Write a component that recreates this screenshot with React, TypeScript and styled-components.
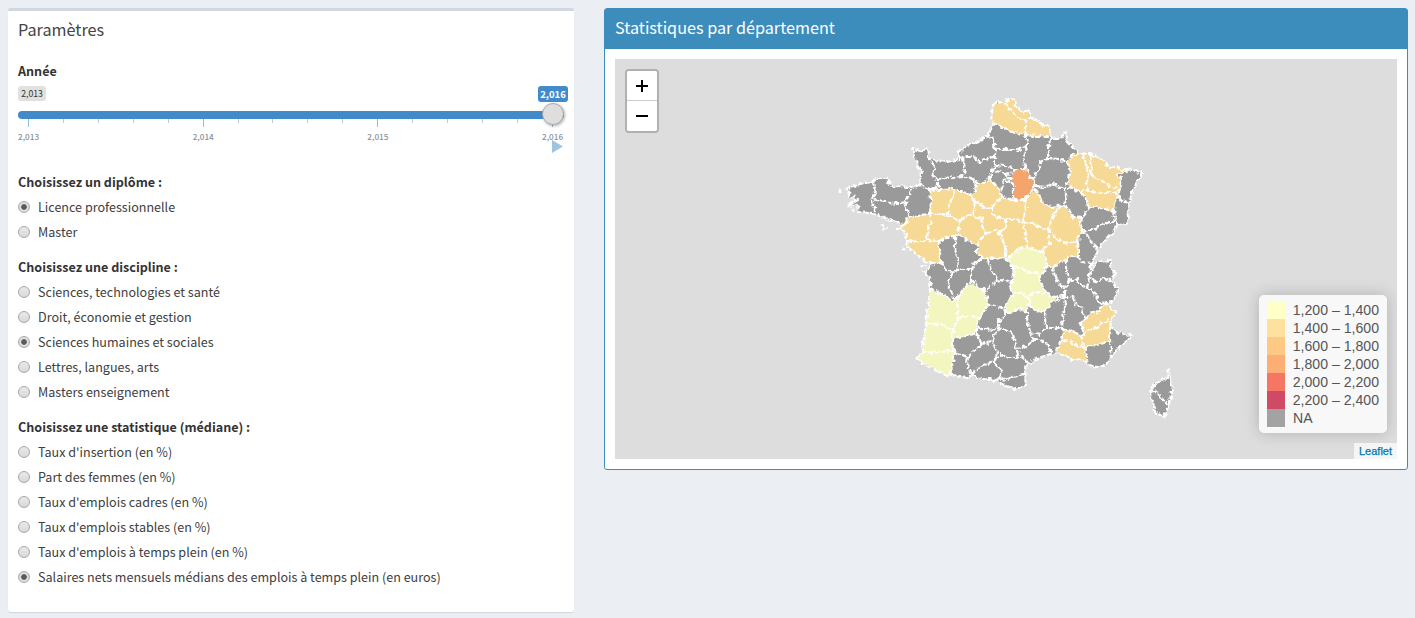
import React, { useState } from "react";
import styled, { createGlobalStyle, css } from "styled-components";

const GlobalStyle = createGlobalStyle`
  * { box-sizing: border-box; }
  body {
    margin: 0;
    background: #ebeff4;
    color: #333;
    font-family: "Source Sans Pro", "Noto Sans CJK SC", "Open Sans", sans-serif;
    font-size: 12.57px;
  }
`;

const Page = styled.main`
  display: grid;
  grid-template-columns: 566px 804px;
  column-gap: 30px;
  align-items: start;
  padding: 8px;
`;

const Box = styled.section<{ $solid?: boolean }>`
  background: #fff;
  border-radius: 3px;
  ${(p) =>
    p.$solid
      ? css`
          border: 1px solid #3c8dbc;
          height: 462px;
        `
      : css`
          border-top: 3px solid #d2d6de;
          height: 604px;
          box-shadow: 0 1px 1px rgba(0, 0, 0, 0.1);
        `}
`;

const BoxHeader = styled.header<{ $solid?: boolean }>`
  display: flex;
  align-items: center;
  height: ${(p) => (p.$solid ? 40 : 38)}px;
  padding: 0 10px ${(p) => (p.$solid ? 4 : 2)}px;
  color: ${(p) => (p.$solid ? "#fff" : "#444")};
  background: ${(p) => (p.$solid ? "#3c8dbc" : "transparent")};
`;

const BoxTitle = styled.h3`
  margin: 0;
  font-size: 16.2px;
  font-weight: 400;
  line-height: 18px;
`;

const BoxBody = styled.div<{ $form?: boolean }>`
  padding: ${(p) => (p.$form ? 9 : 10)}px 10px 10px;
`;

const GroupLabel = styled.div`
  height: 25px;
  line-height: 25px;
  font-weight: 700;
`;

/* slider */
const Slider = styled.div`
  position: relative;
  height: 86px;
  padding-top: 3px;
`;

const MinBadge = styled.div`
  width: 28px;
  height: 15px;
  border-radius: 3px;
  background: #e1e1e1;
  color: #333;
  font-size: 8.6px;
  line-height: 15px;
  text-align: center;
`;

const ValueBadge = styled.div`
  position: absolute;
  top: 3px;
  left: 520px;
  width: 30px;
  height: 16px;
  border-radius: 3px;
  background: #428bca;
  color: #fff;
  font-size: 9.5px;
  font-weight: 700;
  line-height: 16px;
  text-align: center;
`;

const Track = styled.div`
  width: 546px;
  height: 8px;
  margin-top: 10px;
  border-radius: 4px;
  background: #428bca;
`;

const Handle = styled.div`
  position: absolute;
  top: 20px;
  left: 524px;
  width: 22px;
  height: 22px;
  border: 1px solid #aaa;
  border-radius: 50%;
  background: #dedede;
  box-shadow: 1px 1px 3px rgba(0, 0, 0, 0.3);
`;

const Ticks = styled.div`
  display: flex;
  justify-content: space-between;
  width: 525px;
  height: 8px;
  margin-left: 10px;
`;

const Tick = styled.span<{ $major: boolean }>`
  width: 1px;
  height: ${(p) => (p.$major ? 8 : 4)}px;
  background: ${(p) => (p.$major ? "#8fbce0" : "#c3c9ce")};
`;

const TickLabels = styled.div`
  display: flex;
  justify-content: space-between;
  width: 545px;
  margin-top: 2px;
  color: #87939c;
  font-size: 8.2px;
  font-weight: 500;
  line-height: 15px;
`;

const TickLabel = styled.span`
  width: 21px;
  text-align: center;
`;

const PlayButton = styled.button`
  position: absolute;
  top: 57px;
  left: 534px;
  width: 11px;
  height: 13px;
  padding: 0;
  border: 0;
  background: #9ec5dd;
  clip-path: polygon(0 0, 100% 50%, 0 100%);
`;

/* radio groups */
const Group = styled.div`
  margin-bottom: 10px;
`;

const Option = styled.label`
  display: flex;
  align-items: center;
  gap: 8px;
  height: 25px;
  line-height: 25px;
  color: #404040;
`;

const Radio = styled.input`
  appearance: none;
  flex: none;
  width: 12px;
  height: 12px;
  margin: 0;
  border: 1px solid #a8a8a8;
  border-radius: 50%;
  background: linear-gradient(#e9e9e9, #d9d9d9);
  &:checked {
    background: radial-gradient(circle, #5a5a5a 0 2.4px, #dedede 3.2px);
  }
`;

/* map */
const MapView = styled.div`
  position: relative;
  height: 400px;
  background: #ddd;
  overflow: hidden;
  font-family: "Liberation Sans", Arial, sans-serif;
`;

const MapDrawing = styled.svg`
  display: block;
`;

const ZoomBar = styled.div`
  position: absolute;
  top: 10px;
  left: 10px;
  width: 34px;
  border: 2px solid rgba(0, 0, 0, 0.2);
  border-radius: 4px;
  background-clip: padding-box;
`;

const ZoomButton = styled.button`
  display: flex;
  align-items: center;
  justify-content: center;
  width: 30px;
  height: 30px;
  padding: 0;
  border: 0;
  background: #fff;
  &:first-child {
    border-bottom: 1px solid #ccc;
    border-radius: 2px 2px 0 0;
  }
  &:last-child {
    border-radius: 0 0 2px 2px;
  }
`;

const Legend = styled.div`
  position: absolute;
  right: 10px;
  bottom: 26px;
  width: 128px;
  padding: 6px 8px;
  border-radius: 5px;
  background: rgba(255, 255, 255, 0.8);
  box-shadow: 0 0 15px rgba(0, 0, 0, 0.2);
  color: #555;
  font-size: 14.1px;
`;

const LegendRow = styled.div`
  display: flex;
  gap: 8px;
  height: 18px;
  line-height: 18px;
  white-space: nowrap;
`;

const Swatch = styled.i<{ $color: string }>`
  width: 18px;
  height: 18px;
  background: ${(p) => p.$color};
`;

const Attribution = styled.div`
  position: absolute;
  right: 0;
  bottom: 0;
  padding: 0 5px;
  background: rgba(255, 255, 255, 0.7);
  color: #0078a8;
  font-size: 11px;
  line-height: 16px;
  -webkit-text-stroke: 0.25px #0078a8;
`;

const GROUPS = [
  {
    name: "diplome",
    label: "Choisissez un diplôme :",
    value: 0,
    options: ["Licence professionnelle", "Master"],
  },
  {
    name: "discipline",
    label: "Choisissez une discipline :",
    value: 2,
    options: [
      "Sciences, technologies et santé",
      "Droit, économie et gestion",
      "Sciences humaines et sociales",
      "Lettres, langues, arts",
      "Masters enseignement",
    ],
  },
  {
    name: "statistique",
    label: "Choisissez une statistique (médiane) :",
    value: 5,
    options: [
      "Taux d'insertion (en %)",
      "Part des femmes (en %)",
      "Taux d'emplois cadres (en %)",
      "Taux d'emplois stables (en %)",
      "Taux d'emplois à temps plein (en %)",
      "Salaires nets mensuels médians des emplois à temps plein (en euros)",
    ],
  },
];

const LEGEND: [string, string][] = [
  ["#ffffc8", "1,200 – 1,400"],
  ["#fee19f", "1,400 – 1,600"],
  ["#fdc983", "1,600 – 1,800"],
  ["#fcae74", "1,800 – 2,000"],
  ["#f57663", "2,000 – 2,200"],
  ["#d04a66", "2,200 – 2,400"],
  ["#a3a3a3", "NA"],
];

const MAINLAND =
  "993,105 997,103 1003,102 1009,99 1014,99 1016,106 1022,113 1028,110 1030,113 1030,118 1035,120 1040,122 1043,126 1049,126 1051,132 1050,136 1052,139 1060,139 1063,137 1066,131 1067,140 1072,147 1077,150 1079,153 1090,154 1098,157 1104,161 1110,168 1117,167 1122,170 1128,168 1135,171 1142,173 1137,183 1133,190 1130,200 1127,206 1128,217 1126,224 1122,225 1117,223 1113,232 1107,239 1101,245 1098,250 1096,254 1093,260 1091,265 1092,270 1098,262 1105,261 1110,260 1112,270 1115,274 1110,280 1117,287 1118,295 1112,302 1105,303 1110,307 1116,313 1112,318 1110,327 1115,330 1123,335 1132,334 1128,340 1122,345 1117,351 1112,354 1108,362 1103,367 1097,367 1090,366 1086,363 1082,361 1077,358 1073,360 1067,357 1060,353 1050,354 1040,358 1033,361 1027,364 1025,373 1026,387 1018,387 1013,389 1006,386 1000,383 995,381 990,379 983,379 978,377 972,374 968,378 960,377 950,374 945,375 938,371 933,368 928,367 923,363 916,358 922,353 925,333 928,307 930,290 930,280 925,272 932,264 928,262 920,258 914,252 908,247 907,240 905,232 898,229 907,223 903,225 897,222 891,221 885,218 877,215 867,213 858,212 857,206 848,205 858,200 850,197 847,190 855,185 865,183 873,182 877,178 888,178 890,184 893,188 902,186 912,188 920,185 921,170 917,163 914,157 913,148 919,151 927,149 928,157 933,160 947,162 960,159 958,152 967,145 978,142 988,135 993,125 992,113";

const CORSICA =
  "1169,369 1171,377 1172,390 1170,400 1168,407 1164,418 1160,415 1155,412 1153,402 1151,392 1154,385 1159,381 1164,379 1168,378";

type Zone = { fill: string; points: string };

const ORANGE_LIGHT = "#f5d995";
const PALE = "#f4f6c0";

const ZONES: Zone[] = [
  {
    fill: ORANGE_LIGHT,
    points:
      "993,105 1003,102 1009,99 1014,99 1016,106 1022,113 1028,110 1030,118 1040,122 1043,126 1049,126 1051,132 1050,136 1038,136 1026,135 1018,134 1007,130 1000,126 993,124 992,113",
  },
  {
    fill: ORANGE_LIGHT,
    points:
      "1079,153 1090,154 1098,157 1104,161 1110,168 1117,167 1128,168 1128,172 1117,173 1116,176 1122,178 1120,188 1118,197 1115,205 1113,212 1108,210 1098,207 1088,207 1087,200 1081,193 1069,187 1069,180 1070,173 1068,162 1072,155",
  },
  {
    fill: ORANGE_LIGHT,
    points:
      "930,189 941,190 952,188 955,191 963,191 972,196 977,187 978,183 987,181 990,176 993,182 1000,190 1001,197 1014,200 1025,200 1027,197 1036,190 1040,197 1045,205 1053,207 1062,205 1066,207 1068,211 1073,217 1082,218 1080,223 1082,230 1079,235 1078,242 1079,252 1078,257 1068,257 1065,260 1058,264 1053,266 1047,266 1047,260 1042,252 1033,249 1027,248 1020,248 1012,255 1007,259 998,257 990,259 982,258 977,252 977,245 968,240 958,235 950,237 938,241 940,250 940,262 932,264 920,258 914,252 908,247 907,240 905,232 898,229 908,217 918,216 930,213 931,200",
  },
  {
    fill: ORANGE_LIGHT,
    points:
      "1062,328 1068,330 1075,332 1082,337 1083,330 1080,325 1086,318 1090,313 1100,312 1100,307 1105,303 1110,307 1116,313 1112,318 1110,327 1110,337 1110,343 1104,343 1097,345 1085,347 1087,355 1086,363 1077,358 1073,360 1067,357 1060,353 1055,352 1060,343 1063,335",
  },
  {
    fill: PALE,
    points:
      "1027,248 1033,249 1042,252 1047,260 1046,266 1042,273 1039,277 1043,287 1045,293 1052,295 1057,300 1050,305 1045,311 1035,310 1028,306 1027,312 1020,309 1013,311 1005,315 1007,302 1013,293 1010,287 1012,282 1014,275 1013,267 1007,259 1012,255 1020,248",
  },
  {
    fill: PALE,
    points:
      "930,288 943,295 953,301 958,297 965,287 972,283 979,288 985,290 988,305 980,317 977,327 977,333 967,336 952,338 952,348 955,352 953,363 950,374 945,375 933,368 923,363 916,358 922,353 925,333 928,307",
  },
  {
    fill: "#f4a56c",
    points:
      "1015,170 1023,169 1028,170 1030,177 1034,180 1034,187 1027,197 1025,200 1014,200 1014,190 1013,181 1009,180 1012,175",
  },
];

const BORDERS = [
  // Nord, Picardie, Champagne
  "1005,103 1007,108 1015,114 1020,118 1025,120 1026,127 1026,134 1027,147 1023,157 1025,165 1023,169",
  "993,124 1000,126 1007,130 1018,134 1026,135 1038,136 1050,136",
  "987,133 993,140 995,148 1005,150 1015,150 1027,147",
  "995,148 995,157 995,165 993,170 990,177",
  "960,158 963,157 973,157 980,162 987,158 995,157",
  "995,165 1005,166 1015,169 1023,169 1028,170 1030,177 1034,180 1034,187",
  "1052,139 1048,148 1048,158 1040,162 1040,168 1035,175 1033,179",
  "1048,158 1057,159 1068,162 1070,173 1069,180 1065,187",
  "1079,153 1072,155 1068,162",
  "1035,186 1047,187 1052,183 1060,188 1065,187 1065,190 1067,200 1063,206",
  // Lorraine, Alsace, Franche-Comté
  "1083,155 1087,167 1088,178 1086,188",
  "1090,155 1092,165 1090,173 1095,178 1105,182 1113,188 1119,187",
  "1128,169 1124,173 1117,173 1116,176 1122,178 1120,188 1118,197 1115,205 1113,212",
  "1086,190 1092,192 1103,193 1118,193",
  "1069,187 1080,192 1086,190",
  "1082,193 1087,200 1088,207 1098,207 1108,210 1113,212 1117,223",
  "1118,198 1127,202",
  "1088,207 1088,211 1082,218 1080,223 1082,230 1079,235 1078,242 1079,252 1078,257",
  "1034,188 1037,193 1040,197 1045,205 1053,207 1062,205 1068,208 1073,217 1082,218",
  "1082,230 1090,231 1100,226 1110,222 1115,221",
  "1082,230 1087,235 1092,242 1097,249",
  // Bourgogne, Centre
  "1062,206 1057,210 1052,218 1049,230 1048,236 1050,243 1043,250 1042,252 1047,260 1047,266",
  "1049,230 1055,237 1063,243 1078,241",
  "1024,222 1033,224 1042,228 1049,230",
  "1025,200 1026,210 1023,220 1025,230 1026,240 1027,248",
  "1001,197 1014,200 1025,200 1027,197 1034,189",
  "975,202 980,205 986,208 992,207 997,202 1001,199",
  "992,207 992,214 1000,218 1005,219 1015,219 1024,222",
  "1005,219 1006,224 1005,228 998,233 1002,238 1005,247 1005,258",
  "987,233 993,230 999,232",
  "1042,252 1033,249 1027,248 1020,248 1012,255 1007,259 998,257 990,259 982,258 977,252 977,245",
  // Auvergne
  "1007,259 1013,267 1020,267 1025,271 1033,273 1042,273",
  "1046,266 1042,273 1039,277 1043,287 1045,293 1055,297 1063,295",
  "1013,267 1014,275 1012,282 1010,287 1013,293 1020,293 1028,297 1033,293 1045,293",
  "1028,297 1030,303 1027,310 1027,318 1030,332",
  "1030,306 1035,310 1045,311 1050,305 1057,300 1063,295",
  "1013,293 1007,302 1005,315 1013,311 1020,308 1027,313",
  // Rhône-Alpes, Provence
  "1047,266 1053,266 1058,264 1065,260 1068,257 1078,257 1082,262 1092,263",
  "1053,267 1055,277 1060,285 1065,289",
  "1067,260 1067,273 1070,280 1065,288 1065,297",
  "1070,280 1077,280 1082,285 1087,288 1095,293 1098,302 1105,303",
  "1091,265 1089,277 1087,288",
  "1089,275 1092,280 1100,282 1104,278 1110,280",
  "1063,295 1066,303 1063,317 1062,328",
  "1065,297 1073,297 1075,305 1082,308 1083,313 1086,318 1080,325 1083,330 1083,335",
  "1086,318 1090,313 1100,312 1100,307 1105,303",
  "1083,335 1090,330 1098,327 1102,322 1112,321",
  "1062,328 1068,330 1075,332 1082,337 1082,341 1085,347 1087,355 1086,363",
  "1063,340 1069,341 1075,345 1085,347 1097,345 1104,343 1110,343",
  "1110,327 1110,337 1110,345 1112,353",
  // Languedoc, Midi-Pyrénées
  "1045,311 1045,318 1046,328 1053,328 1062,328 1063,335 1060,343 1055,352",
  "1030,332 1040,334 1046,328",
  "1030,332 1034,340 1028,345 1023,347 1016,348 1018,355 1023,358 1027,363",
  "1034,340 1040,340 1047,342 1049,348 1051,353",
  "1005,315 998,322 1000,328 1012,333 1015,342 1017,348",
  "995,358 1001,355 1007,357 1018,357",
  "995,363 1002,370 1000,378 1007,379 1013,377 1025,375",
  "1000,378 995,382",
  "973,374 975,370 983,365 995,362 995,358",
  "1000,329 993,335 993,343 997,352 995,358",
  // Limousin, Aquitaine
  "982,258 975,263 972,269 972,280 965,287 957,298",
  "988,260 990,268 997,278 998,282 1005,280 1012,282",
  "972,280 979,288 985,290 991,285 998,282",
  "985,290 988,305 996,306 1003,308 1005,312",
  "988,305 980,317 977,327 990,330 1000,328",
  "930,288 943,295 953,301 958,297 957,312 958,320 953,330 952,338 952,348",
  "928,323 942,325 953,330",
  "958,318 968,316 978,317",
  "952,338 967,336 977,333 977,327",
  "922,353 940,352 955,351 953,363 950,374",
  "952,348 957,353 968,357 967,363 970,373",
  "977,334 982,345 975,351 968,357",
  "981,344 993,342",
  // Poitou-Charentes, Pays de la Loire
  "940,262 945,268 953,273 958,270 965,269 972,269",
  "953,273 947,282 952,293 955,299",
  "955,237 955,247 957,258 958,270",
  "932,264 940,262 940,250 938,241",
  "908,240 920,243 927,240 938,241 950,237 958,235 968,240 977,245 982,237 987,233",
  "960,220 959,227 958,235",
  "930,214 931,220 928,230 927,240",
  "973,212 973,216 982,220 983,228 987,233",
  // Normandie, Bretagne, Maine
  "907,222 908,217 918,216 930,213 948,215 958,220 966,218 973,212 975,202 973,197",
  "954,192 950,203 948,215",
  "930,189 931,200 930,213",
  "920,185 930,189 941,190 952,188 955,191 963,191 972,196 977,187 972,178",
  "928,157 935,168 932,177 938,179 938,187 930,189",
  "938,179 945,178 952,177 963,176 972,178 978,183 987,181 990,176",
  "963,157 965,170 963,176",
  "873,182 875,193 872,202 875,207 873,212",
  "875,200 885,202 897,204 905,202 910,195 912,188",
  "905,202 908,215",
  // Île-de-France
  "990,177 993,182 1000,190 1001,197",
  "991,170 1000,172 1006,175 1004,180 1001,190",
  "1005,174 1007,181 1013,183 1013,198",
  "1006,174 1012,173 1015,169",
  "1008,177 1012,179 1009,182",
  // Corse
  "1152,390 1161,397 1166,404",
];

const ISLETS: [number, number][] = [
  [840, 190], [883, 229], [887, 228], [904, 249], [855, 201], [858, 207],
  [921, 266], [925, 266], [855, 196], [853, 210], [1009, 178], [882, 225],
];

const toPath = (points: string, close = false) =>
  "M" + points.split(" ").join("L") + (close ? "Z" : "");

function France() {
  return (
    <MapDrawing width="782" height="400" viewBox="615 59 782 400">
      <defs>
        <filter id="coast" x="-2%" y="-2%" width="104%" height="104%" colorInterpolationFilters="sRGB">
          <feTurbulence type="fractalNoise" baseFrequency="0.2" numOctaves="2" seed="4" result="n" />
          <feDisplacementMap in="SourceGraphic" in2="n" scale="6" xChannelSelector="R" yChannelSelector="G" />
        </filter>
      </defs>
      <g filter="url(#coast)">
        <path d={toPath(MAINLAND, true)} fill="#9a9a9a" />
        <path d={toPath(CORSICA, true)} fill="#9a9a9a" />
        {ZONES.map((z) => (
          <path key={z.points} d={toPath(z.points, true)} fill={z.fill} />
        ))}
        <g fill="none" stroke="#fff" strokeWidth="2.2" strokeDasharray="3.6 3" strokeLinecap="round" strokeLinejoin="round">
          <path d={toPath(MAINLAND, true)} />
          <path d={toPath(CORSICA, true)} />
          {BORDERS.map((b) => (
            <path key={b} d={toPath(b)} />
          ))}
        </g>
        {ISLETS.map(([x, y]) => (
          <circle key={`${x}-${y}`} cx={x} cy={y} r="1.5" fill="#fff" />
        ))}
      </g>
    </MapDrawing>
  );
}

function RadioGroup({ group }: { group: (typeof GROUPS)[number] }) {
  const [value, setValue] = useState(group.value);
  return (
    <Group>
      <GroupLabel>{group.label}</GroupLabel>
      {group.options.map((text, i) => (
        <Option key={text}>
          <Radio type="radio" name={group.name} checked={value === i} onChange={() => setValue(i)} />
          {text}
        </Option>
      ))}
    </Group>
  );
}

export default function App() {
  return (
    <>
      <GlobalStyle />
      <Page>
        <Box>
          <BoxHeader>
            <BoxTitle>Paramètres</BoxTitle>
          </BoxHeader>
          <BoxBody $form>
            <GroupLabel>Année</GroupLabel>
            <Slider>
              <MinBadge>2,013</MinBadge>
              <ValueBadge>2,016</ValueBadge>
              <Track />
              <Ticks>
                {Array.from({ length: 16 }, (_, i) => (
                  <Tick key={i} $major={i % 5 === 0} />
                ))}
              </Ticks>
              <TickLabels>
                {["2,013", "2,014", "2,015", "2,016"].map((t) => (
                  <TickLabel key={t}>{t}</TickLabel>
                ))}
              </TickLabels>
              <Handle />
              <PlayButton aria-label="Play" />
            </Slider>
            {GROUPS.map((g) => (
              <RadioGroup key={g.name} group={g} />
            ))}
          </BoxBody>
        </Box>
        <Box $solid>
          <BoxHeader $solid>
            <BoxTitle>Statistiques par département</BoxTitle>
          </BoxHeader>
          <BoxBody>
            <MapView>
              <France />
              <ZoomBar>
                <ZoomButton aria-label="Zoom in">
                  <svg width="12" height="12" viewBox="0 0 12 12">
                    <path d="M0 6h12M6 0v12" stroke="#000" strokeWidth="2" />
                  </svg>
                </ZoomButton>
                <ZoomButton aria-label="Zoom out">
                  <svg width="12" height="12" viewBox="0 0 12 12">
                    <path d="M0 6h12" stroke="#000" strokeWidth="2" />
                  </svg>
                </ZoomButton>
              </ZoomBar>
              <Legend>
                {LEGEND.map(([color, text]) => (
                  <LegendRow key={text}>
                    <Swatch $color={color} />
                    {text}
                  </LegendRow>
                ))}
              </Legend>
              <Attribution>Leaflet</Attribution>
            </MapView>
          </BoxBody>
        </Box>
      </Page>
    </>
  );
}
